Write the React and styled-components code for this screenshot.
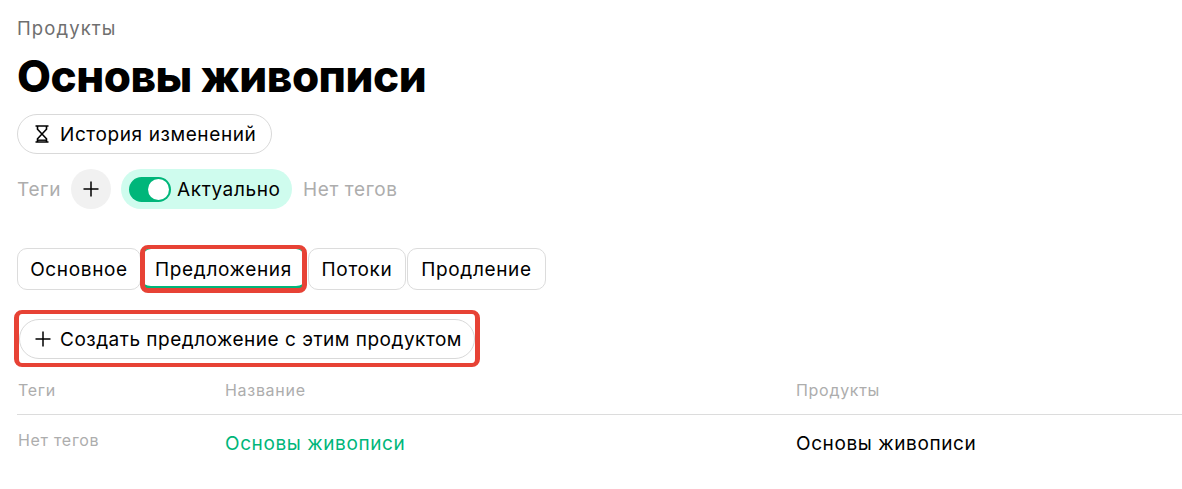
import React from 'react';
import styled, { createGlobalStyle } from 'styled-components';

const GlobalStyle = createGlobalStyle`
  html, body {
    margin: 0;
    padding: 0;
    background: #fff;
    overflow: hidden;
  }
  body {
    font-family: 'Inter', 'Noto Sans', sans-serif;
    color: #000;
  }
`;

const Page = styled.div`
  padding: 16px 0 0 17px;
`;

const Breadcrumb = styled.div`
  font-size: 18.5px;
  line-height: 24px;
  letter-spacing: 1.1px;
  color: #6f6f6f;
`;

const Title = styled.h1`
  margin: 10px 0 12px;
  font-size: 44px;
  line-height: 52px;
  font-weight: 800;
  letter-spacing: -0.5px;
`;

const PillButton = styled.button`
  display: flex;
  align-items: center;
  gap: ${(p) => p.$gap || 10}px;
  width: ${(p) => p.$width}px;
  height: 40px;
  padding: 0 0 0 ${(p) => p.$left || 16}px;
  box-sizing: border-box;
  border: 1px solid #d9d9d9;
  border-radius: 20px;
  background: #fff;
  color: #000;
  font: inherit;
  font-size: 19px;
  letter-spacing: ${(p) => p.$spacing || 0.6}px;
  white-space: nowrap;
`;

const TagsRow = styled.div`
  display: flex;
  align-items: center;
  height: 40px;
  margin-top: 15px;
  font-size: 19px;
  letter-spacing: 0.6px;
`;

const Muted = styled.span`
  color: #adadad;
`;

const AddTag = styled.button`
  display: flex;
  align-items: center;
  justify-content: center;
  width: 40px;
  height: 40px;
  margin: 0 10px;
  padding: 0;
  border: 0;
  border-radius: 50%;
  background: #f1f1f1;
  color: #000;
`;

const StatusPill = styled.div`
  display: flex;
  align-items: center;
  gap: 6px;
  width: 171px;
  height: 40px;
  margin-right: 11px;
  padding-left: 8px;
  box-sizing: border-box;
  border-radius: 20px;
  background: #cffcee;
`;

const Toggle = styled.span`
  display: flex;
  justify-content: flex-end;
  align-items: center;
  width: 42px;
  height: 25px;
  padding: 2px;
  box-sizing: border-box;
  border-radius: 13px;
  background: #00b67a;
  &::after {
    content: '';
    width: 21px;
    height: 21px;
    border-radius: 50%;
    background: #fff;
  }
`;

const Tabs = styled.nav`
  display: flex;
  margin-top: 39px;
`;

const Tab = styled.div`
  position: relative;
  display: flex;
  align-items: center;
  justify-content: center;
  box-sizing: border-box;
  width: ${(p) => p.$width}px;
  height: 42px;
  margin-right: ${(p) => p.$after || 0}px;
  padding-top: ${(p) => (p.$active ? 3 : 0)}px;
  border: 1px solid ${(p) => (p.$active ? '#00b67a' : '#dcdcdc')};
  border-bottom-width: ${(p) => (p.$active ? 4 : 1)}px;
  border-radius: 10px;
  background: #fff;
  font-size: 19px;
  letter-spacing: 0.65px;
`;

/* red annotation drawn over the selected tab */
const TabMark = styled.span`
  position: absolute;
  top: -4px;
  left: -2px;
  right: -2px;
  bottom: -7px;
  border: 5px solid #e74235;
  border-top-width: 4px;
  border-radius: 8px;
`;

const CreateFrame = styled.div`
  display: inline-flex;
  margin: 20px 0 0 -3px;
  padding: 5px 0 4px;
  border: solid #e74235;
  border-width: 4px 5px;
  border-radius: 8px;
  background: #fff;
`;

const Table = styled.div``;

const HeaderRow = styled.div`
  display: grid;
  grid-template-columns: 207px 571px 1fr;
  height: 48px;
  box-sizing: border-box;
  align-items: center;
  padding: 0 0 2px 1px;
  border-bottom: 1px solid #dcdcdc;
  font-size: 16px;
  letter-spacing: 0.7px;
  color: #adadad;
`;

const BodyRow = styled.div`
  display: grid;
  grid-template-columns: 207px 571px 1fr;
  padding: 16px 0 0 1px;
  font-size: 19px;
  line-height: 26px;
  letter-spacing: 0.6px;
`;

const EmptyTags = styled.span`
  color: #adadad;
  font-size: 16px;
  line-height: 18px;
  letter-spacing: 0.7px;
`;

const ProductLink = styled.a`
  color: #00b67a;
`;

const Plus = () => (
  <svg width="16" height="16" viewBox="0 0 16 16" fill="none" stroke="currentColor" strokeWidth="1.5">
    <path d="M8 0.5v15M0.5 8h15" />
  </svg>
);

const Hourglass = () => (
  <svg width="16" height="18" viewBox="0 0 16 18" fill="none" stroke="#000" strokeWidth="1.6">
    <path d="M1.5 1h13M1.5 17h13" />
    <path d="M3.5 1v3.2L12.5 13.8V17M12.5 1v3.2L3.5 13.8V17" />
    <path d="M4 15.2h8" strokeWidth="1.4" />
  </svg>
);

export default function App() {
  return (
    <Page>
      <GlobalStyle />
      <Breadcrumb>Продукты</Breadcrumb>
      <Title>Основы живописи</Title>
      <PillButton $width={255}>
        <Hourglass />
        История изменений
      </PillButton>
      <TagsRow>
        <Muted>Теги</Muted>
        <AddTag>
          <Plus />
        </AddTag>
        <StatusPill>
          <Toggle />
          Актуально
        </StatusPill>
        <Muted>Нет тегов</Muted>
      </TagsRow>
      <Tabs>
        <Tab $width={124}>Основное</Tab>
        <Tab $width={165} $after={2} $active>
          Предложения
          <TabMark />
        </Tab>
        <Tab $width={98} $after={1}>
          Потоки
        </Tab>
        <Tab $width={139}>Продление</Tab>
      </Tabs>
      <CreateFrame>
        <PillButton $width={456} $left={15} $gap={9} $spacing={0.5}>
          <Plus />
          Создать предложение с этим продуктом
        </PillButton>
      </CreateFrame>
      <Table>
        <HeaderRow>
          <span>Теги</span>
          <span>Название</span>
          <span>Продукты</span>
        </HeaderRow>
        <BodyRow>
          <EmptyTags>Нет тегов</EmptyTags>
          <ProductLink>Основы живописи</ProductLink>
          <span>Основы живописи</span>
        </BodyRow>
      </Table>
    </Page>
  );
}
